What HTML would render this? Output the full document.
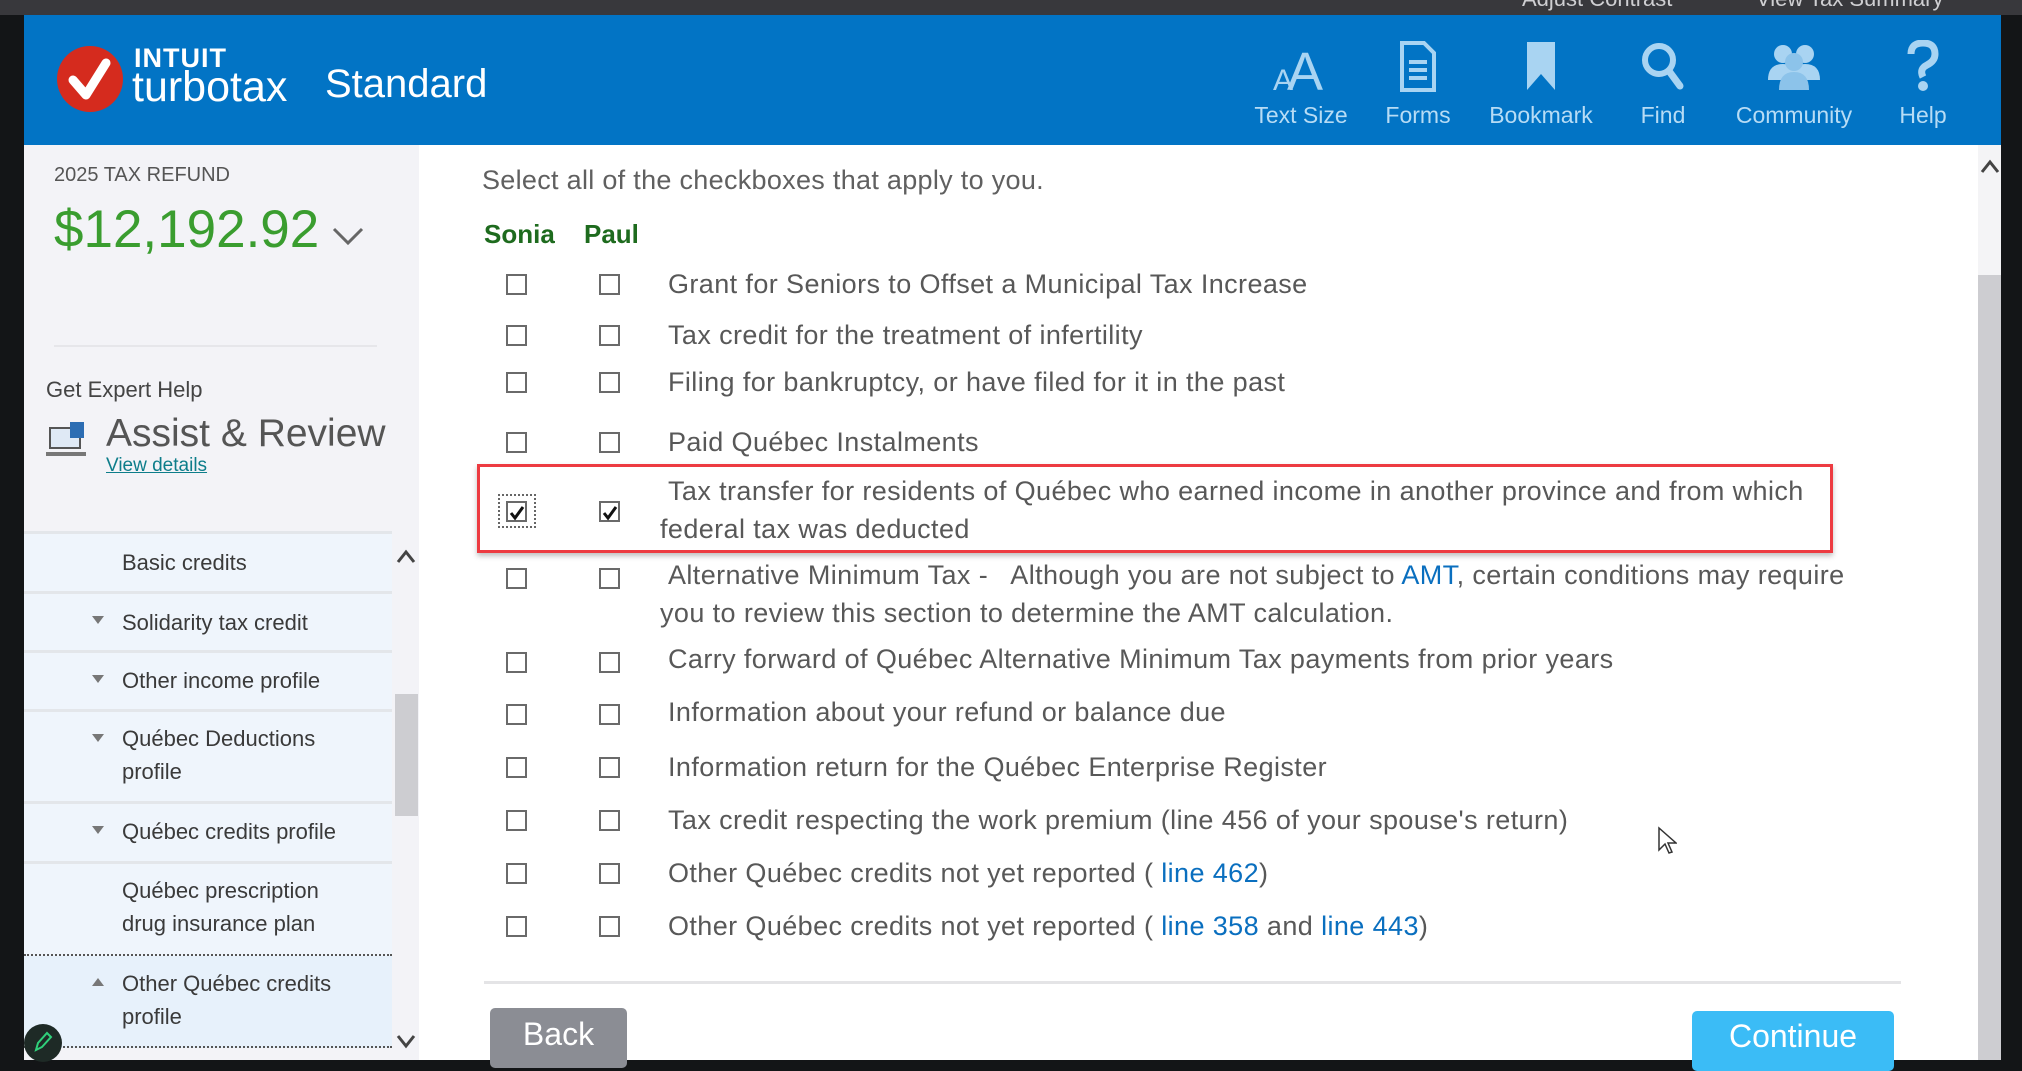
<!DOCTYPE html>
<html><head><meta charset="utf-8"><style>
*{margin:0;padding:0;box-sizing:border-box}
body{width:2022px;height:1060px;overflow:hidden;background:#131517;font-family:"Liberation Sans",sans-serif;position:relative}
.abs{position:absolute}
#top{left:0;top:0;width:2022px;height:15px;background:#38383c;overflow:hidden}
#top span{position:absolute;top:-14px;color:#cfcfd2;font-size:22px}
#hdr{left:24px;top:15px;width:1977px;height:130px;background:#0274c5}
.ico{position:absolute;top:25px;width:130px;text-align:center;color:#a9d4f2}
.ico svg{display:block;margin:0 auto;height:52px}
.ico div{font-size:23px;margin-top:10px;color:#b7dcf5}
#side{left:24px;top:145px;width:395px;height:915px;background:#f3f3f7}
#main{left:419px;top:145px;width:1582px;height:915px;background:#fff}
.nav{position:absolute;left:24px;width:368px;background:#eff5fc;border-bottom:3px solid #e3e6ea;font-size:22px;color:#3a3a3a}
.nav span{position:absolute;left:98px;line-height:33px}
.tri{position:absolute;left:68px;width:0;height:0;border-left:6px solid transparent;border-right:6px solid transparent}
.cb{position:absolute;width:21px;height:21px;border:2px solid #6a6a6a;background:#fff}
.t{position:absolute;left:668px;font-size:27px;letter-spacing:0.4px;color:#585858;white-space:nowrap;line-height:38px}
a{color:#0a6fbf;text-decoration:none}
</style></head><body>
<div id="top" class="abs"><span style="left:1522px">Adjust Contrast</span><span style="left:1756px">View Tax Summary</span></div>
<div id="hdr" class="abs">
 <svg class="abs" style="left:32px;top:28px" width="70" height="72"><circle cx="34" cy="36" r="33" fill="#d52b1e"/><path d="M17 37 L30 52 L50 20" stroke="#fff" stroke-width="9" fill="none" stroke-linecap="round" stroke-linejoin="round"/></svg>
 <div class="abs" style="left:110px;top:28px;color:#fff;font-size:27px;font-weight:bold;letter-spacing:1px">INTUIT</div>
 <div class="abs" style="left:108px;top:48px;color:#fff;font-size:43px">turbotax</div>
 <div class="abs" style="left:301px;top:47px;color:#fff;font-size:40px">Standard</div>
 <div class="ico" style="left:1212px"><svg viewBox="0 0 60 52" width="60"><text x="2" y="50" font-size="30" fill="#a9d4f2" font-family="Liberation Sans">A</text><text x="16" y="50" font-size="54" fill="#a9d4f2" font-family="Liberation Sans">A</text></svg><div>Text Size</div></div>
 <div class="ico" style="left:1329px"><svg viewBox="0 0 40 52" width="40"><path d="M4 3h22l10 10v37H4z" fill="none" stroke="#a9d4f2" stroke-width="4"/><path d="M11 22h18M11 30h18M11 38h18" stroke="#a9d4f2" stroke-width="4"/></svg><div>Forms</div></div>
 <div class="ico" style="left:1452px"><svg viewBox="0 0 40 52" width="40"><path d="M6 2h28v48L20 34 6 50z" fill="#a9d4f2"/></svg><div>Bookmark</div></div>
 <div class="ico" style="left:1574px"><svg viewBox="0 0 46 52" width="46"><circle cx="19" cy="20" r="14" fill="none" stroke="#a9d4f2" stroke-width="6"/><path d="M29 31l11 15" stroke="#a9d4f2" stroke-width="7" stroke-linecap="round"/></svg><div>Find</div></div>
 <div class="ico" style="left:1705px"><svg viewBox="0 0 56 52" width="56"><circle cx="17" cy="14" r="9" fill="#a9d4f2"/><circle cx="39" cy="14" r="9" fill="#a9d4f2"/><path d="M2 40q0-16 15-16t15 16z M24 40q0-16 15-16t15 16z" fill="#a9d4f2"/><circle cx="28" cy="22" r="9" fill="#8cc3ea"/><path d="M13 50q0-18 15-18t15 18z" fill="#8cc3ea"/></svg><div>Community</div></div>
 <div class="ico" style="left:1834px"><svg viewBox="0 0 40 52" width="40"><path d="M8 14q0-11 12-11t12 11q0 7-8 11t-4 12" fill="none" stroke="#a9d4f2" stroke-width="7"/><circle cx="20" cy="46" r="5" fill="#a9d4f2"/></svg><div>Help</div></div>
</div>
<div id="side" class="abs"></div>
<div class="abs" style="left:54px;top:164px;font-size:20px;color:#555">2025 TAX REFUND</div>
<div class="abs" style="left:54px;top:199px;font-size:53px;color:#3a9d2f">$12,192.92</div>
<svg class="abs" style="left:332px;top:227px" width="32" height="20"><path d="M2 2l14 14L30 2" stroke="#666" stroke-width="3" fill="none"/></svg>
<div class="abs" style="left:54px;top:345px;width:323px;height:2px;background:#e6e6ea"></div>
<div class="abs" style="left:46px;top:377px;font-size:22px;color:#444">Get Expert Help</div>
<svg class="abs" style="left:46px;top:420px" width="42" height="40"><rect x="4" y="8" width="30" height="20" fill="#dfe9f5" stroke="#555" stroke-width="2"/><rect x="24" y="2" width="14" height="16" fill="#2c6db3"/><path d="M0 32h40v4H0z" fill="#777"/></svg>
<div class="abs" style="left:106px;top:412px;font-size:39px;color:#555">Assist &amp; Review</div>
<div class="abs" style="left:106px;top:455px;font-size:19px;color:#0d7d8a;text-decoration:underline">View details</div>
<div class="abs" style="left:24px;top:531px;width:368px;height:3px;background:#e3e6ea"></div>
<div class="nav" style="top:534px;height:60px"><span style="top:12px">Basic credits</span></div>
<div class="nav" style="top:594px;height:59px"><div class="tri" style="top:22px;border-top:8px solid #777"></div><span style="top:12px">Solidarity tax credit</span></div>
<div class="nav" style="top:653px;height:59px"><div class="tri" style="top:22px;border-top:8px solid #777"></div><span style="top:11px">Other income profile</span></div>
<div class="nav" style="top:712px;height:92px"><div class="tri" style="top:22px;border-top:8px solid #777"></div><span style="top:10px">Québec Deductions<br>profile</span></div>
<div class="nav" style="top:804px;height:60px"><div class="tri" style="top:22px;border-top:8px solid #777"></div><span style="top:11px">Québec credits profile</span></div>
<div class="nav" style="top:864px;height:92px;border-bottom:2px dotted #555"><span style="top:10px">Québec prescription<br>drug insurance plan</span></div>
<div class="nav" style="top:956px;height:92px;background:#e7f1fb;border-bottom:2px dotted #555"><div class="tri" style="top:22px;border-bottom:8px solid #777"></div><span style="top:11px">Other Québec credits<br>profile</span></div>
<div class="abs" style="left:395px;top:694px;width:23px;height:122px;background:#cdcdd1"></div>
<svg class="abs" style="left:395px;top:548px" width="22" height="16"><path d="M3 14l8-10 8 10" stroke="#444" stroke-width="3" fill="none"/></svg>
<svg class="abs" style="left:395px;top:1034px" width="22" height="16"><path d="M3 2l8 10 8-10" stroke="#444" stroke-width="3" fill="none"/></svg>
<div class="abs" style="left:24px;top:1024px;width:38px;height:38px;border-radius:50%;background:#1e2a26"></div>
<svg class="abs" style="left:32px;top:1030px" width="22" height="24"><path d="M4 20l2-7 9-10 4 4-9 10z" stroke="#2fd07a" stroke-width="2" fill="none"/></svg>
<div id="main" class="abs"></div>
<div class="abs" style="left:482px;top:165px;font-size:27px;letter-spacing:0.3px;color:#606060">Select all of the checkboxes that apply to you.</div>
<div class="abs" style="left:484px;top:219px;font-size:26px;color:#1e6b1e;font-weight:bold">Sonia</div>
<div class="abs" style="left:584px;top:219px;font-size:26px;color:#1e6b1e;font-weight:bold">Paul</div>
<div class="abs" style="left:477px;top:464px;width:1356px;height:89px;border:3px solid #ed3b41;box-shadow:0 3px 5px rgba(0,0,0,.25)"></div>
<div class="abs" style="left:498px;top:494px;width:38px;height:34px;border:2px dotted #666"></div>

<div class="cb" style="left:506px;top:274px"></div><div class="cb" style="left:599px;top:274px"></div><div class="t" style="top:265px">Grant for Seniors to Offset a Municipal Tax Increase</div>
<div class="cb" style="left:506px;top:325px"></div><div class="cb" style="left:599px;top:325px"></div><div class="t" style="top:316px">Tax credit for the treatment of infertility</div>
<div class="cb" style="left:506px;top:372px"></div><div class="cb" style="left:599px;top:372px"></div><div class="t" style="top:363px">Filing for bankruptcy, or have filed for it in the past</div>
<div class="cb" style="left:506px;top:432px"></div><div class="cb" style="left:599px;top:432px"></div><div class="t" style="top:423px">Paid Québec Instalments</div>
<div class="cb" style="left:506px;top:501px"><svg width="20" height="20" style="position:absolute;left:-1px;top:-1px"><path d="M4 11l4 5 8-11" stroke="#111" stroke-width="3" fill="none"/></svg></div>
<div class="cb" style="left:599px;top:501px"><svg width="20" height="20" style="position:absolute;left:-1px;top:-1px"><path d="M4 11l4 5 8-11" stroke="#111" stroke-width="3" fill="none"/></svg></div>
<div class="t" style="top:472px">Tax transfer for residents of Québec who earned income in another province and from which<br><span style="margin-left:-8px">federal tax was deducted</span></div>
<div class="cb" style="left:506px;top:568px"></div><div class="cb" style="left:599px;top:568px"></div>
<div class="t" style="top:556px">Alternative Minimum Tax -&nbsp;&nbsp; Although you are not subject to <a>AMT</a>, certain conditions may require<br><span style="margin-left:-8px">you to review this section to determine the AMT calculation.</span></div>
<div class="cb" style="left:506px;top:652px"></div><div class="cb" style="left:599px;top:652px"></div><div class="t" style="top:640px">Carry forward of Québec Alternative Minimum Tax payments from prior years</div>
<div class="cb" style="left:506px;top:704px"></div><div class="cb" style="left:599px;top:704px"></div><div class="t" style="top:693px">Information about your refund or balance due</div>
<div class="cb" style="left:506px;top:757px"></div><div class="cb" style="left:599px;top:757px"></div><div class="t" style="top:748px">Information return for the Québec Enterprise Register</div>
<div class="cb" style="left:506px;top:810px"></div><div class="cb" style="left:599px;top:810px"></div><div class="t" style="top:801px">Tax credit respecting the work premium (line 456 of your spouse's return)</div>
<div class="cb" style="left:506px;top:863px"></div><div class="cb" style="left:599px;top:863px"></div><div class="t" style="top:854px">Other Québec credits not yet reported ( <a>line 462</a>)</div>
<div class="cb" style="left:506px;top:916px"></div><div class="cb" style="left:599px;top:916px"></div><div class="t" style="top:907px">Other Québec credits not yet reported ( <a>line 358</a> and <a>line 443</a>)</div>

<div class="abs" style="left:484px;top:981px;width:1417px;height:3px;background:#e4e4e6"></div>
<div class="abs" style="left:490px;top:1008px;width:137px;height:60px;background:#8b8d94;border-radius:5px;color:#fff;font-size:32px;text-align:center;line-height:52px">Back</div>
<div class="abs" style="left:1692px;top:1011px;width:202px;height:60px;background:#3bbcf6;border-radius:5px;color:#fff;font-size:32px;text-align:center;line-height:50px">Continue</div>
<div class="abs" style="left:1978px;top:145px;width:23px;height:915px;background:#f4f4f6"></div>
<div class="abs" style="left:1978px;top:275px;width:23px;height:785px;background:#cdcdd1"></div>
<svg class="abs" style="left:1979px;top:158px" width="22" height="16"><path d="M3 14l8-10 8 10" stroke="#444" stroke-width="3" fill="none"/></svg>
<svg class="abs" style="left:1657px;top:826px" width="20" height="30"><path d="M2 2v22l6-6 4 9 3-1-4-9h8z" fill="#fff" stroke="#333" stroke-width="1.5"/></svg>
</body></html>
